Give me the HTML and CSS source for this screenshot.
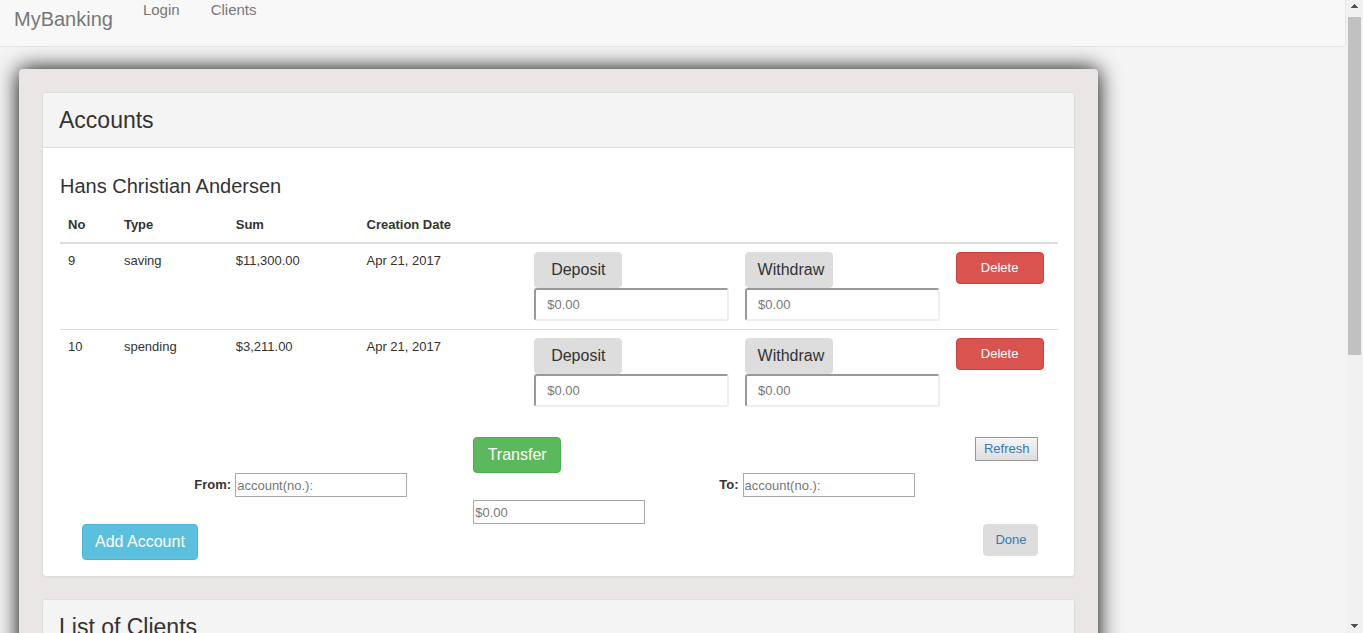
FILE: index.html
```html
<!DOCTYPE html>
<html lang="en">
<head>
<meta charset="utf-8">
<title>MyBanking</title>
<link rel="stylesheet" href="styles.css">
</head>
<body>
<div class="page">
  <nav class="navbar">
    <a class="brand" href="#">MyBanking</a>
    <a class="nav-link" href="#">Login</a>
    <a class="nav-link" href="#">Clients</a>
  </nav>
  <main class="well">
    <section class="panel">
      <header class="panel-heading"><h2>Accounts</h2></header>
      <div class="panel-body">
        <h3 class="client-name">Hans Christian Andersen</h3>
        <table class="accounts">
          <colgroup>
            <col class="col-no"><col class="col-type"><col class="col-sum"><col class="col-date"><col class="col-amount"><col class="col-amount"><col class="col-delete">
          </colgroup>
          <thead>
            <tr><th>No</th><th>Type</th><th>Sum</th><th>Creation Date</th><th></th><th></th><th></th></tr>
          </thead>
          <tbody>
            <tr>
              <td>9</td><td>saving</td><td>$11,300.00</td><td>Apr 21, 2017</td>
              <td><button class="btn btn-default" type="button">Deposit</button><input class="amount" type="text" placeholder="$0.00" aria-label="Deposit amount"></td>
              <td><button class="btn btn-default btn-withdraw" type="button">Withdraw</button><input class="amount" type="text" placeholder="$0.00" aria-label="Withdraw amount"></td>
              <td><button class="btn btn-danger" type="button">Delete</button></td>
            </tr>
            <tr>
              <td>10</td><td>spending</td><td>$3,211.00</td><td>Apr 21, 2017</td>
              <td><button class="btn btn-default" type="button">Deposit</button><input class="amount" type="text" placeholder="$0.00" aria-label="Deposit amount"></td>
              <td><button class="btn btn-default btn-withdraw" type="button">Withdraw</button><input class="amount" type="text" placeholder="$0.00" aria-label="Withdraw amount"></td>
              <td><button class="btn btn-danger" type="button">Delete</button></td>
            </tr>
          </tbody>
        </table>
        <form class="transfer">
          <button class="btn btn-success" type="button">Transfer</button>
          <button class="refresh" type="button">Refresh</button>
          <div class="field field-from"><label for="from">From:</label><input class="plain" id="from" type="text" placeholder="account(no.):"></div>
          <div class="field field-to"><label for="to">To:</label><input class="plain" id="to" type="text" placeholder="account(no.):"></div>
          <input class="plain sum" type="text" placeholder="$0.00" aria-label="Transfer amount">
          <button class="btn btn-info" type="button">Add Account</button>
          <button class="btn btn-done" type="button">Done</button>
        </form>
      </div>
    </section>
    <section class="panel">
      <header class="panel-heading"><h2>List of Clients</h2></header>
      <div class="panel-body"></div>
    </section>
  </main>
</div>
<div class="scrollbar" aria-hidden="true">
  <svg class="arrow" viewBox="0 0 17 17"><path d="M8 4h1v1h1v1h1v1h1v1H5V7h1V6h1V5h1z"/></svg>
  <div class="thumb"></div>
  <svg class="arrow arrow-down" viewBox="0 0 17 17"><path d="M5 8h7v1h-1v1h-1v1H9v1H8v-1H7v-1H6V9H5z"/></svg>
</div>
</body>
</html>
```
FILE: styles.css
```css
* { box-sizing: border-box; }

body {
  margin: 0;
  height: 100vh;
  display: flex;
  overflow: hidden;
  background: #f4f4f4;
  color: #333;
  font: 13px/18px "Liberation Sans", Arial, sans-serif;
}

button, input { font: inherit; color: inherit; margin: 0; }
input::placeholder { color: #777; opacity: 1; }
a { text-decoration: none; }
h2, h3 { margin: 0; font-weight: 400; }

.page { flex: 1; min-width: 0; overflow: hidden; }

.navbar {
  display: flex;
  align-items: flex-start;
  height: 47px;
  padding-left: 14px;
  background: #f8f8f8;
  border: solid #e7e7e7;
  border-width: 0 1px 1px 0;
  border-radius: 0 0 4px 0;
}
.brand { margin-right: 30px; padding-top: 8px; font-size: 20px; line-height: 22px; color: #777; }
.nav-link { margin-right: 31px; font-size: 15px; line-height: 20px; color: #777; }

.well {
  width: 80.2%;
  margin: 22px 0 0 19px;
  padding: 23px;
  background: #eae6e5;
  border-radius: 4px;
  box-shadow: 0 0 22px #000;
}

.panel {
  margin-bottom: 22px;
  background: #fff;
  border: 1px solid #ddd;
  border-radius: 4px;
  box-shadow: 0 1px 1px rgba(0, 0, 0, .05);
}
.panel-heading {
  padding: 14px 16px;
  background: #f4f4f4;
  border-bottom: 1px solid #ddd;
  border-radius: 3px 3px 0 0;
}
.panel-heading h2 { font-size: 23px; line-height: 26px; }
.panel-body { padding: 26px 16px 16px 17px; }
.client-name { font-size: 20px; line-height: 24px; }

.accounts { width: 100%; margin-top: 10px; border-collapse: separate; border-spacing: 0; table-layout: fixed; }
.accounts th { padding: 8px; text-align: left; line-height: 18px; border-bottom: 2px solid #ddd; }
.accounts td { padding: 8px; vertical-align: top; }
.accounts tbody tr + tr td { border-top: 1px solid #ddd; }
.col-no { width: 5.6%; }
.col-type { width: 11.2%; }
.col-sum { width: 13.1%; }
.col-date { width: 16.8%; }
.col-amount { width: 21.1%; }
.col-delete { width: 11.1%; }

.btn {
  display: block;
  height: 36px;
  padding: 0 12px;
  border: 1px solid transparent;
  border-radius: 4px;
  font-size: 16px;
  line-height: 20px;
  white-space: nowrap;
}
.btn-default { width: 88px; padding: 0; background: #ddd; border-color: #ddd; }
.btn-withdraw { padding-left: 4px; }
.btn-danger { width: 88px; height: 32px; background: #d9534f; border-color: #d43f3a; color: #fff; font-size: 13px; }
.btn-success { width: 88px; background: #5cb85c; border-color: #4cae4c; color: #fff; }
.btn-info { background: #5bc0de; border-color: #46b8da; color: #fff; }
.btn-done { height: 32px; padding: 0 11px; background: #ddd; border-color: #ddd; color: #337ab7; font-size: 13px; }

.amount {
  display: block;
  width: 100%;
  height: 33px;
  padding: 0 11px;
  background: #fff;
  border: 2px solid;
  border-color: #999 #eee #eee #999;
  border-radius: 3px;
}

.transfer {
  display: grid;
  grid-template-columns: 391fr 246fr 319fr;
  grid-template-rows: 36px 27px 24px 36px;
  align-items: start;
  margin-top: 22px;
  padding: 0 20px 0 22px;
}
.transfer .btn-success { grid-area: 1 / 2; }
.refresh {
  grid-area: 1 / 3;
  justify-self: end;
  height: 24px;
  padding: 0 8px;
  border: 1px solid #999;
  background: linear-gradient(#f5f5f5, #ddd);
  color: #337ab7;
}
.field { display: flex; align-items: center; gap: 4px; }
.field label { font-weight: 700; }
.field-from { grid-area: 2 / 1; justify-self: end; margin-right: 66px; }
.field-to { grid-area: 2 / 3; }
.plain { width: 172px; height: 24px; padding: 0 1px; border: 1px solid #a9a9a9; background: #fff; }
.sum { grid-area: 3 / 2; }
.btn-info { grid-area: 4 / 1; justify-self: start; }
.btn-done { grid-area: 4 / 3; justify-self: end; }

.scrollbar { width: 17px; display: flex; flex-direction: column; background: #f1f1f1; }
.arrow { width: 17px; height: 17px; fill: #505050; }
.arrow-down { margin-top: auto; }
.thumb { height: 55%; max-height: 338px; margin: 0 2px; background: #c1c1c1; }
```
